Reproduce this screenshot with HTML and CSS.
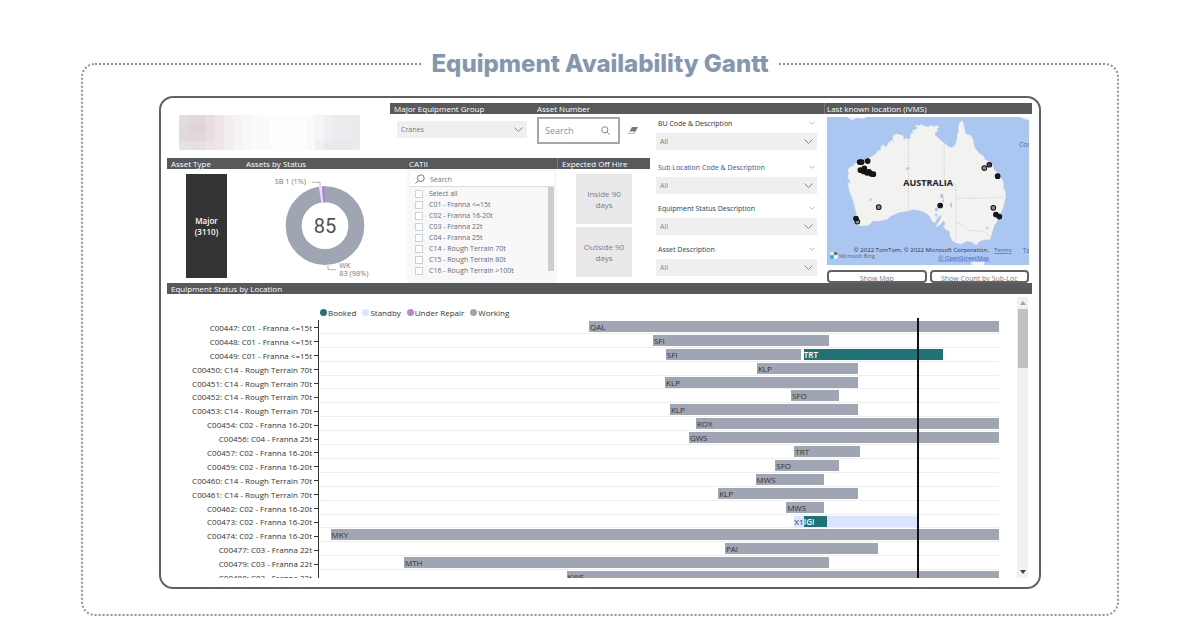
FILE: index.html
```html
<!DOCTYPE html>
<html lang="en">
<head>
<meta charset="utf-8">
<title>Equipment Availability Gantt</title>
<link rel="stylesheet" href="styles.css">
</head>
<body>
<main class="page">
<fieldset class="frame">
<legend class="frame-title">Equipment Availability Gantt</legend>
<div class="card">
  <div class="top">
    <div class="main">
      <div class="logo">
        <svg class="logo-art" viewBox="0 0 20 4" preserveAspectRatio="none" shape-rendering="crispEdges" role="img" aria-label="Company logo">
          <rect width="20" height="4" fill="#fdfdfd"/>
          <rect x="0" width="1" height="4" fill="#dedadd"/><rect x="1" width="2" height="4" fill="#e2d8dc"/><rect x="3" width="1" height="4" fill="#e8dde1"/><rect x="4" width="1" height="4" fill="#ede5e8"/><rect x="5" width="1" height="4" fill="#f1edef"/><rect x="6" width="1" height="4" fill="#f5f3f4"/><rect x="7" width="1" height="4" fill="#f8f7f8"/><rect x="8" width="2" height="4" fill="#fafafa"/><rect x="14" width="1" height="4" fill="#f9fafa"/><rect x="15" width="1" height="4" fill="#f4f5f6"/><rect x="16" width="1" height="4" fill="#eeeff1"/><rect x="17" width="2" height="4" fill="#ececee"/><rect x="19" width="1" height="4" fill="#ebebeb"/>
          <rect x="0" width="1" height="1" fill="#e0dddf"/><rect x="1" y="1" width="2" height="1" fill="#e0d4d8"/><rect x="0" y="3" width="1" height="1" fill="#e5e2e4"/><rect x="1" y="3" width="2" height="1" fill="#e6dfe3"/><rect x="3" y="3" width="1" height="1" fill="#ebe3e7"/><rect x="15" y="3" width="1" height="1" fill="#eff0f2"/><rect x="16" y="3" width="3" height="1" fill="#e7e9ed"/><rect x="17" y="2" width="1" height="1" fill="#e9ebee"/>
        </svg>
      </div>
      <div class="bar bar-filters">
        <label for="group">Major Equipment Group</label>
        <label for="asset">Asset Number</label>
      </div>
      <div class="controls">
        <div class="pick pick-group">
          <select id="group"><option>Cranes</option></select>
          <svg class="chevron" viewBox="0 0 9 5"><path d="M.5 .5 4.500 4.500 8.500 .5"/></svg>
        </div>
        <div class="asset">
          <div class="asset-box">
            <input id="asset" type="text" placeholder="Search">
            <svg class="lens" viewBox="0 0 10 10"><circle cx="4.200" cy="4.200" r="3.400"/><path d="M6.800 6.800 9.500 9.500"/></svg>
          </div>
          <button class="erase" type="button" aria-label="Clear search"><svg viewBox="0 0 10 8"><path d="M4 0h6L6 7H0z" fill="#777"/><path d="M1.500 4.600h5.200L5.600 6.400H.6z" fill="#fff"/></svg></button>
        </div>
      </div>
      <div class="filters">
        <div class="filter first"><div class="filter-head"><label for="f1">BU Code &amp; Description</label><svg class="chevron small" viewBox="0 0 9 5"><path d="M.5 .5 4.500 4.500 8.500 .5"/></svg></div>
          <div class="pick"><select id="f1"><option>All</option></select><svg class="chevron" viewBox="0 0 9 5"><path d="M.5 .5 4.500 4.500 8.500 .5"/></svg></div></div>
        <div class="filter blue"><div class="filter-head"><label for="f2">Sub Location Code &amp; Description</label><svg class="chevron small" viewBox="0 0 9 5"><path d="M.5 .5 4.500 4.500 8.500 .5"/></svg></div>
          <div class="pick"><select id="f2"><option>All</option></select><svg class="chevron" viewBox="0 0 9 5"><path d="M.5 .5 4.500 4.500 8.500 .5"/></svg></div></div>
        <div class="filter navy"><div class="filter-head"><label for="f3">Equipment Status Description</label><svg class="chevron small" viewBox="0 0 9 5"><path d="M.5 .5 4.500 4.500 8.500 .5"/></svg></div>
          <div class="pick"><select id="f3"><option>All</option></select><svg class="chevron" viewBox="0 0 9 5"><path d="M.5 .5 4.500 4.500 8.500 .5"/></svg></div></div>
        <div class="filter navy"><div class="filter-head"><label for="f4">Asset Description</label><svg class="chevron small" viewBox="0 0 9 5"><path d="M.5 .5 4.500 4.500 8.500 .5"/></svg></div>
          <div class="pick"><select id="f4"><option>All</option></select><svg class="chevron" viewBox="0 0 9 5"><path d="M.5 .5 4.500 4.500 8.500 .5"/></svg></div></div>
      </div>
      <div class="panel">
        <div class="bar bar-panel"><span>Asset Type</span><span>Assets by Status</span><span>CATII</span><span class="split">Expected Off Hire</span></div>
        <div class="panel-body">
          <div class="type"><button class="type-tile" type="button">Major<br>(3110)</button></div>
          <svg class="donut" viewBox="246 57 489 342">
            <circle cx="495" cy="227" r="94" fill="none" stroke="#a0a5b3" stroke-width="48"/>
            <path d="M476.500 110.500A118 118 0 0 1 486 109.300L489.700 157.200A70 70 0 0 0 484 157.900Z" fill="#dde3fb"/>
            <path d="M486 109.300A118 118 0 0 1 496 109L496 157A70 70 0 0 0 489.700 157.200Z" fill="#b985cf"/>
            <path d="M456 97h24v10M504 346v13h25" fill="none" stroke="#b5b5b5" stroke-width="3"/>
            <text x="344" y="102" class="donut-label">SB 1 (1%)</text>
            <text x="538" y="353" class="donut-label">WK</text>
            <text x="538" y="379" class="donut-label">83 (98%)</text>
            <text x="495" y="248" class="donut-total">85</text>
          </svg>
          <div class="catii">
            <div class="catii-search"><svg class="lens flip" viewBox="0 0 10 10"><circle cx="4.200" cy="4.200" r="3.400"/><path d="M6.800 6.800 9.500 9.500"/></svg><input type="text" placeholder="Search" aria-label="Search CATII"></div>
            <div class="catii-list">
              <div class="options">
                <label><input type="checkbox">Select all</label>
                <label><input type="checkbox">C01 - Franna &lt;=15t</label>
                <label><input type="checkbox">C02 - Franna 16-20t</label>
                <label><input type="checkbox">C03 - Franna 22t</label>
                <label><input type="checkbox">C04 - Franna 25t</label>
                <label><input type="checkbox">C14 - Rough Terrain 70t</label>
                <label><input type="checkbox">C15 - Rough Terrain 80t</label>
                <label><input type="checkbox">C16 - Rough Terrain &gt;100t</label>
              </div>
              <div class="list-thumb"></div>
            </div>
          </div>
          <div class="hire"><button type="button">Inside 90<br>days</button><button type="button">Outside 90<br>days</button></div>
        </div>
      </div>
    </div>
    <div class="location">
      <div class="bar bar-map"><span>Last known location (IVMS)</span></div>
      <div class="location-body">
        <svg class="map" viewBox="22 67 605 443" preserveAspectRatio="xMidYMid slice">
          <rect x="22" y="67" width="605" height="443" fill="#abc6f1"/>
          <path d="M82 67h58l-8 5-22-2-12 7zM600 67h27v10l-14-3zM452 500l12-2 12 3 18-3-2 14h-34z" fill="#eff1f2"/>
          <path d="M85 225 90 218 98 215 106 206 115 203 140 198 152 188 165 180 176 168 185 165 182 158 190 150 198 157 203 152 205 142 213 146 211 137 222 140 218 128 224 120 234 118 240 122 246 120 252 128 250 137 258 131 266 134 273 128 272 120 280 113 278 107 288 105 294 98 285 94 292 91 298 94 306 88 312 95 324 97 336 92 342 97 350 92 357 98 351 103 353 109 346 113 345 122 358 132 368 142 376 148 386 157 396 159 405 152 410 140 413 118 417 108 415 98 421 82 427 78 432 92 434 107 440 120 448 120 455 126 460 138 462 152 468 165 480 178 490 183 495 195 508 201 517 210 521 224 532 234 536 242 547 256 551 270 549 278 556 290 557 305 553 322 548 342 538 360 531 380 522 392 517 410 512 425 510 434 495 434 480 438 468 450 456 441 442 438 424 447 410 444 397 437 391 424 389 408 378 404 371 396 377 386 371 376 362 388 348 396 354 384 362 374 366 358 358 364 350 372 345 384 336 378 330 363 314 352 298 346 280 344 255 350 240 351 215 362 200 374 178 378 160 378 145 391 125 393 108 388 103 378 103 366 111 358 104 330 98 310 89 288 85 265 93 263 84 245 88 236z" fill="#f2f2f1" stroke="#f7f8fa" stroke-width="1"/>
          <path d="M346 337l9 3-2 10-8-3zM362 295l8 5 2 10-11-2zM366 317l7-6-2 14zM391 326l6-4-2 18-4-5zM259 220l10-3-1 7-8 1zM148 310l10 3-6 6zM347 355l6 3-2 8-5-3zM500 395l6 5-7 5z" fill="#abc6f1"/>
          <path d="M266 135V345M373 147V268H408V438M408 310H505L518 306 530 310 552 303M408 382 426 388 434 398 448 407 490 409 505 418 512 428" fill="none" stroke="#cbcbcb" stroke-width="2.500" stroke-dasharray="5 4"/>
          <g stroke="#111" stroke-width="3" fill="#161819">
            <circle cx="120" cy="202" r="7"/><circle cx="126" cy="202" r="7"/><circle cx="144" cy="199" r="7"/><circle cx="122" cy="226" r="7"/><circle cx="134" cy="221" r="7"/><circle cx="132" cy="230" r="7"/><circle cx="142" cy="234" r="7"/><circle cx="148" cy="231" r="7"/><circle cx="154" cy="237" r="7"/><circle cx="161" cy="238" r="7"/>
            <circle cx="113" cy="380" r="7" fill="#999"/><circle cx="109" cy="371" r="7"/><circle cx="177" cy="337" r="7" fill="#888"/><circle cx="361" cy="332" r="7"/><circle cx="493" cy="220" r="7" fill="#888"/><circle cx="508" cy="210" r="7" fill="#444"/><circle cx="533" cy="244" r="7"/><circle cx="520" cy="339" r="7" fill="#888"/><circle cx="528" cy="359" r="7"/><circle cx="538" cy="365" r="7"/>
          </g>
          <text x="325" y="275" class="map-country">AUSTRALIA</text>
          <text x="597" y="158" class="map-sea">Cor</text>
          <text x="608" y="475" class="map-sea">Ta</text>
          <text x="507" y="472" text-anchor="end" class="map-note">© 2022 TomTom, © 2022 Microsoft Corporation.</text>
          <a href="#terms"><text x="522" y="472" class="map-link">Terms</text></a>
          <a href="#osm"><text x="508" y="494" text-anchor="end" class="map-link">© OpenStreetMap</text></a>
          <path d="M32 471h10v9H32z" fill="#e9eef5"/><path d="M43 471h10v9H43z" fill="#737373"/><path d="M32 481h10v10H32z" fill="#28a8ea"/><path d="M43 481h10v10H43z" fill="#fff"/>
          <text x="58" y="489" class="map-brand">Microsoft Bing</text>
        </svg>
        <div class="map-buttons"><button type="button">Show Map</button><button type="button">Show Count by Sub-Loc</button></div>
      </div>
    </div>
  </div>
  <section class="gantt">
    <h2 class="bar bar-gantt">Equipment Status by Location</h2>
    <div class="gantt-body">
      <div class="chart">
        <ul class="legend"><li class="booked">Booked</li><li class="standby">Standby</li><li class="repair">Under Repair</li><li class="working">Working</li></ul>
        <div class="plot">
          <div class="rows">
            <div class="row"><div class="name">C00447: C01 - Franna &lt;=15t</div><div class="track"><span class="span" style="margin-left:39.7%;width:60.3%">QAL</span></div></div>
            <div class="row"><div class="name">C00448: C01 - Franna &lt;=15t</div><div class="track"><span class="span" style="margin-left:49.1%;width:25.9%">SFI</span></div></div>
            <div class="row"><div class="name">C00449: C01 - Franna &lt;=15t</div><div class="track"><span class="span" style="margin-left:51%;width:19.9%">SFI</span><span class="span is-booked" style="margin-left:0.4%;width:20.4%">TRT</span></div></div>
            <div class="row"><div class="name">C00450: C14 - Rough Terrain 70t</div><div class="track"><span class="span" style="margin-left:64.4%;width:14.9%">KLP</span></div></div>
            <div class="row"><div class="name">C00451: C14 - Rough Terrain 70t</div><div class="track"><span class="span" style="margin-left:50.9%;width:28.4%">KLP</span></div></div>
            <div class="row"><div class="name">C00452: C14 - Rough Terrain 70t</div><div class="track"><span class="span" style="margin-left:69.4%;width:7.1%">SFO</span></div></div>
            <div class="row"><div class="name">C00453: C14 - Rough Terrain 70t</div><div class="track"><span class="span" style="margin-left:51.6%;width:27.7%">KLP</span></div></div>
            <div class="row"><div class="name">C00454: C02 - Franna 16-20t</div><div class="track"><span class="span" style="margin-left:55.4%;width:44.6%">ROX</span></div></div>
            <div class="row"><div class="name">C00456: C04 - Franna 25t</div><div class="track"><span class="span" style="margin-left:54.4%;width:45.6%">GWS</span></div></div>
            <div class="row"><div class="name">C00457: C02 - Franna 16-20t</div><div class="track"><span class="span" style="margin-left:69.9%;width:9.7%">TRT</span></div></div>
            <div class="row"><div class="name">C00459: C02 - Franna 16-20t</div><div class="track"><span class="span" style="margin-left:67.1%;width:9.4%">SFO</span></div></div>
            <div class="row"><div class="name">C00460: C14 - Rough Terrain 70t</div><div class="track"><span class="span" style="margin-left:64.2%;width:10.1%">MWS</span></div></div>
            <div class="row"><div class="name">C00461: C14 - Rough Terrain 70t</div><div class="track"><span class="span" style="margin-left:58.7%;width:20.6%">KLP</span></div></div>
            <div class="row"><div class="name">C00462: C02 - Franna 16-20t</div><div class="track"><span class="span" style="margin-left:68.7%;width:5.6%">MWS</span></div></div>
            <div class="row"><div class="name">C00473: C02 - Franna 16-20t</div><div class="track"><span class="span is-standby" style="margin-left:69.9%;width:1.4%">X1</span><span class="span is-booked" style="width:3.4%">IGI</span><span class="span is-standby" style="width:13.3%"></span></div></div>
            <div class="row"><div class="name">C00474: C02 - Franna 16-20t</div><div class="track"><span class="span" style="margin-left:1.7%;width:98.3%">MKY</span></div></div>
            <div class="row"><div class="name">C00477: C03 - Franna 22t</div><div class="track"><span class="span" style="margin-left:59.7%;width:22.5%">PAI</span></div></div>
            <div class="row"><div class="name">C00479: C03 - Franna 22t</div><div class="track"><span class="span" style="margin-left:12.5%;width:62.5%">MTH</span></div></div>
            <div class="row"><div class="name">C00480: C03 - Franna 22t</div><div class="track"><span class="span" style="margin-left:36.4%;width:63.6%">KWS</span></div></div>
          </div>
          <div class="overlay"><div class="today"></div></div>
        </div>
      </div>
      <div class="scrollbar"><svg viewBox="0 0 6 4"><path d="M0 4 3 0 6 4z" fill="#a3a3a3"/></svg><div class="thumb"></div><svg viewBox="0 0 6 4"><path d="M0 0 3 4 6 0z" fill="#444"/></svg></div>
    </div>
  </section>
</div>
</fieldset>
</main>
</body>
</html>
```
FILE: styles.css
```css
* { box-sizing: border-box; }
body { margin: 0; background: #fff; color: #333; font: 8px/11px "Open Sans", "Noto Sans", sans-serif; }
button, input, select { margin: 0; padding: 0; border: 0; border-radius: 0; background: none; color: inherit; font: inherit; }
svg { display: block; }

.page { padding: 49px 81px 14px; }
.frame { margin: 0; min-width: 0; padding: 17px 76px 25px; border: 2px dotted #8497b0; border-radius: 14px; }
.frame-title { margin: 0 auto; padding: 0 8px; color: #8497b0; font: 800 24px/30px Inter, sans-serif; }
.card { padding: 5px 7px 9px 6px; border: 2px solid #606163; border-radius: 14px; }

.bar { display: grid; align-items: center; height: 11px; margin: 0; background: #58595b; color: #fff; font-size: 8px; line-height: 11px; font-weight: 500; white-space: nowrap; }
.bar > * { padding-left: 4px; }
.top { display: grid; grid-template-columns: 657fr 208fr; }
.main { display: grid; grid-template-columns: 223fr 260fr 174fr; grid-template-rows: 11px 44px auto; min-width: 0; }
.logo { grid-row: 1 / 3; padding: 12px 30px 8px 12px; }
.logo-art { width: 100%; height: 35px; }
.bar-filters { grid-column: 2 / 4; grid-template-columns: 143fr 291fr; }

.controls { display: grid; grid-template-columns: 147fr 113fr; }
.pick { display: grid; align-items: center; height: 17px; background: #efefef; color: #777; font-size: 7px; }
.pick > * { grid-area: 1 / 1; }
.pick select { width: 100%; height: 17px; padding-left: 4px; appearance: none; }
.pick-group { margin: 7px 10px 0 7px; }
.chevron { justify-self: end; width: 9px; height: 5px; margin-right: 4px; fill: none; stroke: #888; stroke-width: 1; pointer-events: none; }
.chevron.small { width: 6px; height: 4px; margin-right: 2px; stroke: #999; }
.asset { display: flex; align-items: center; gap: 8px; margin-top: 3px; height: 27px; }
.asset-box { display: flex; align-items: center; width: 83px; height: 27px; padding: 0 8px 0 6px; border: 2px solid #a6a6a6; }
.asset-box input { flex: 1; min-width: 0; font-size: 9px; outline: 0; }
.asset-box input::placeholder { color: #8093ac; opacity: 1; }
.lens { width: 9px; height: 9px; fill: none; stroke: #777; stroke-width: 1; }
.lens.flip { width: 10px; height: 10px; transform: scaleX(-1); }
.erase svg { width: 10px; height: 8px; }

.filters { grid-column: 3; grid-row: 2 / 4; display: flex; flex-direction: column; gap: 6px; padding: 1px 7px 0 6px; }
.filter.first { margin-bottom: 3px; }
.filter-head { display: flex; align-items: center; justify-content: space-between; height: 18px; padding: 0 0 2px 2px; font-size: 7px; white-space: nowrap; }
.filter.blue label { color: #2c5d94; }
.filter.navy label { color: #2b3f5c; }
.filter.blue .pick, .filter.navy .pick { color: #7489a2; }

.panel { grid-column: 1 / 3; }
.bar-panel, .panel-body { grid-template-columns: 75fr 163fr 152fr 93fr; }
.split { border-left: 1px solid #77787a; }
.panel-body { display: grid; height: 114px; }
.type { padding: 5px 15px 5px 19px; }
.type-tile { width: 100%; height: 104px; background: #333; color: #fff; font-weight: 600; text-align: center; }
.donut { width: 100%; height: 114px; }
.donut-label { font-size: 22px; fill: #777; }
.donut-total { font: 60px Roboto, sans-serif; fill: #4d5159; text-anchor: middle; }
.catii { margin-left: 2px; padding: 3px; background: #f8f8f8; color: #5f6b7e; font-size: 7px; }
.catii-search { display: flex; align-items: center; gap: 5px; height: 15px; padding-left: 5px; border-bottom: 1px solid #ddd; background: #fff; }
.catii-search input { flex: 1; min-width: 0; outline: 0; }
.catii-search input::placeholder { color: #66778c; opacity: 1; }
.catii-list { display: flex; justify-content: space-between; }
.options { display: grid; padding: 1px 0 0 5px; white-space: nowrap; }
.options label { display: flex; align-items: center; gap: 6px; height: 11px; }
.options input { appearance: none; width: 8px; height: 8px; border: 1px solid #cbd3d8; background: #fff; }
.list-thumb { width: 6px; height: 84px; background: #cdcdcd; }
.hire { display: grid; grid-template-rows: 50px 50px; gap: 3px; padding: 5px 18px 0 19px; }
.hire button { background: #e9e9e9; color: #738094; white-space: nowrap; }

.location { min-width: 0; }
.bar-map span { border-left: 1px solid #77787a; padding-left: 2px; }
.location-body { padding: 3px 3px 0; }
.map { width: 100%; height: 148px; }
.map text { font-family: "Open Sans", sans-serif; }
.map .map-country { font-size: 27px; font-weight: 700; fill: #222; text-anchor: middle; }
.map .map-sea { font-size: 20px; fill: #4967b8; }
.map .map-note { font-size: 18px; fill: #333; }
.map .map-link { font-size: 18px; fill: #3f60c0; text-decoration: underline; }
.map .map-brand { font-size: 16px; fill: #666; }
.map-buttons { display: grid; grid-template-columns: 1fr 1fr; gap: 3px; margin-top: 5px; }
.map-buttons button { display: block; height: 13px; padding-top: 1px; overflow: hidden; border: 2px solid #626365; border-radius: 4px; background: #fff; color: #777; font-size: 7px; line-height: 11px; white-space: nowrap; }

.bar-gantt { padding-left: 4px; }
.gantt-body { display: grid; grid-template-columns: 1fr 11px; gap: 18px; padding: 3px 4px 0 0; }
.legend { display: flex; gap: 6px; margin: 0; padding: 10px 0 0 153px; list-style: none; line-height: 11px; }
.legend li { display: flex; align-items: center; gap: 1px; }
.legend li::before { content: ""; width: 7px; height: 7px; border-radius: 50%; background: #a0a5b3; }
.legend .booked::before { background: #1f7276; }
.legend .standby::before { background: #dae3ff; }
.legend .repair::before { background: #bd87d2; }
.plot { position: relative; height: 260px; overflow: hidden; }
.rows { display: grid; grid-auto-rows: 1fr; height: 266px; padding-top: 2px; }
.row { display: grid; grid-template-columns: 152px 1fr; min-height: 0; }
.name { display: flex; align-items: center; justify-content: flex-end; gap: 2px; padding-top: 2px; border-right: 1px solid #333; white-space: nowrap; min-height: 0; line-height: 10px; }
.name::after { content: ""; width: 4px; height: 1px; background: #333; }
.track { display: flex; align-items: flex-start; padding-top: 1px; border-bottom: 1px solid #eee; min-width: 0; }
.span { height: 11px; padding-left: 1px; overflow: hidden; background: #a0a5b3; line-height: 11px; white-space: nowrap; }
.is-booked { background: #1f7276; color: #fff; font-weight: 600; padding-left: 0; }
.is-standby { background: #dae3ff; padding-left: 0; }
.overlay { position: absolute; inset: 0 0 0 152px; pointer-events: none; }
.today { position: absolute; left: 88%; top: 0; bottom: 0; width: 2px; background: #111; }
.scrollbar { display: flex; flex-direction: column; align-items: center; background: #f1f1f1; }
.scrollbar svg { width: 6px; height: 4px; margin: 4px 0; }
.thumb { width: 10px; height: 59px; margin-bottom: auto; background: #c1c1c1; }
```
